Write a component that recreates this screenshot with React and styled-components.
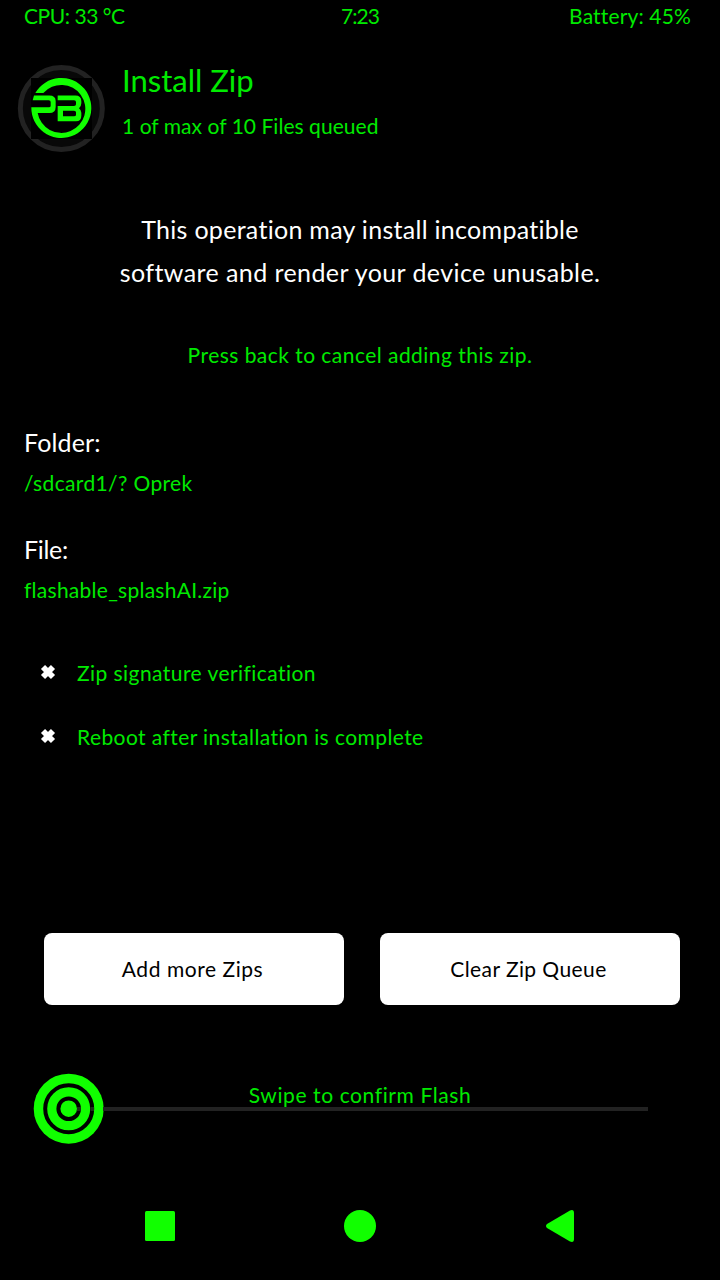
import React from "react";
import styled, { createGlobalStyle } from "styled-components";

const GREEN = "#00ea00";
const BRIGHT = "#11ff00";

const GlobalStyle = createGlobalStyle`
  *, *::before, *::after { box-sizing: border-box; }
  body { margin: 0; background: #000; }
`;

const Screen = styled.main`
  width: 720px;
  height: 1280px;
  overflow: hidden;
  display: flex;
  flex-direction: column;
  background: #000;
  color: ${GREEN};
  font-family: Lato, "Liberation Sans", sans-serif;
  font-size: 21px;
  font-variant-ligatures: none;
  line-height: 28px;
  white-space: nowrap;
`;

const Label = styled.span`
  letter-spacing: ${(p) => p.$track || 0}px;
`;

const StatusBar = styled.header`
  height: 64px;
  padding: 2px 29px 0;
  display: grid;
  grid-template-columns: 1fr auto 1fr;
  & > :first-child { margin-left: -5px; }
  & > :last-child { text-align: right; }
`;

const Header = styled.section`
  height: 144px;
  padding-left: 17px;
  display: flex;
  gap: 15px;
`;

const Logo = styled.svg`
  width: 90px;
  height: 90px;
`;

const Heading = styled.div`
  margin-top: -4px;
`;

const Title = styled.h1`
  margin: 0 0 12px;
  font-size: 31px;
  font-weight: 400;
  line-height: 40px;
`;

const Warning = styled.p`
  margin: 0;
  height: 133px;
  color: #fff;
  font-size: 25px;
  line-height: 43px;
  text-align: center;
`;

const Hint = styled.p`
  margin: 0;
  height: 83px;
  text-align: center;
`;

const Details = styled.dl`
  margin: 0;
  height: 235px;
  padding-left: 24px;
`;

const Term = styled.dt`
  color: #fff;
  font-size: 25px;
  line-height: 36px;
  margin-bottom: 9px;
`;

const Value = styled.dd`
  margin: 0 0 34px;
`;

const Options = styled.div`
  height: 274px;
  padding-left: 40px;
  display: flex;
  flex-direction: column;
  gap: 36px;
`;

const Option = styled.div`
  height: 28px;
  display: flex;
  gap: 21px;
`;

const Cross = styled.svg`
  width: 16px;
  height: 16px;
  margin-top: 5px;
`;

const Actions = styled.div`
  height: 140px;
  padding-left: 44px;
  display: flex;
  gap: 36px;
`;

const ActionButton = styled.button`
  width: 300px;
  height: 72px;
  padding: 0 3px 1px 0;
  border: 0;
  border-radius: 8px;
  background: #fff;
  color: #000;
  font: inherit;
`;

const Slider = styled.div`
  height: 137px;
  padding-left: 33px;
  position: relative;
`;

const SliderArt = styled.svg`
  display: block;
  width: 616px;
  height: 72px;
`;

const SliderText = styled.div`
  position: absolute;
  inset: 8px 0 auto;
  text-align: center;
`;

const NavBar = styled.nav`
  height: 32px;
  padding: 0 144px;
  display: flex;
  justify-content: space-between;
`;

const NavIcon = styled.svg`
  width: 32px;
  height: 32px;
  fill: ${BRIGHT};
`;

const CrossMark = () => (
  <Cross viewBox="0 0 16 16">
    <path d="M3 3L13 13M13 3L3 13" stroke="#fff" strokeWidth="5.8" />
  </Cross>
);

export default function App() {
  return (
    <>
      <GlobalStyle />
      <Screen>
        <StatusBar>
          <Label $track={-0.45}>CPU: 33 °C</Label>
          <Label $track={-0.9}>7:23</Label>
          <Label $track={0.15}>Battery: 45%</Label>
        </StatusBar>

        <Header>
          <Logo viewBox="51 42 270 270">
            <circle cx="184" cy="175.500" r="123" fill="#080808" stroke="#222" strokeWidth="15" />
            <path d="M93 84H276V267H93Z" fill="#000" />
            <g fill={BRIGHT}>
              <path d="M106 129A90 90 0 1 1 94 172H147Q152 172 152 167V156Q152 150.500 146 150.500H98L102 136.500H148Q167 136.500 167 153V171Q167 189 148 189H113A72 72 0 1 0 130 129Z" />
              <path d="M173 136.500H226Q244 136.500 244 154V160Q244 169 237 174.500Q244 180 244 188V197Q244 214 228 214H173V168H222Q228 168 228 163V156Q228 150.500 222 150.500H173ZM189 182V199H222Q228 199 228 194V187Q228 182 222 182Z" fillRule="evenodd" />
            </g>
          </Logo>
          <Heading>
            <Title><Label>Install Zip</Label></Title>
            <Label $track={0.04}>1 of max of 10 Files queued</Label>
          </Heading>
        </Header>

        <Warning>
          <Label $track={0.29}>This operation may install incompatible</Label>
          <br />
          <Label $track={0.42}>software and render your device unusable.</Label>
        </Warning>
        <Hint><Label $track={0.46}>Press back to cancel adding this zip.</Label></Hint>

        <Details>
          <Term><Label $track={0.15}>Folder:</Label></Term>
          <Value><Label $track={0.36}>/sdcard1/? Oprek</Label></Value>
          <Term><Label $track={-0.3}>File:</Label></Term>
          <Value><Label $track={0.26}>flashable_splashAI.zip</Label></Value>
        </Details>

        <Options>
          <Option>
            <CrossMark />
            <Label $track={0.44}>Zip signature verification</Label>
          </Option>
          <Option>
            <CrossMark />
            <Label $track={0.42}>Reboot after installation is complete</Label>
          </Option>
        </Options>

        <Actions>
          <ActionButton><Label $track={0.55}>Add more Zips</Label></ActionButton>
          <ActionButton><Label $track={0.42}>Clear Zip Queue</Label></ActionButton>
        </Actions>

        <Slider>
          <SliderArt viewBox="0 0 616 72">
            <circle cx="35.700" cy="35.700" r="35" fill={BRIGHT} />
            <circle cx="35.700" cy="35.700" r="23.500" fill="none" stroke="#000" strokeWidth="4" />
            <circle cx="35.700" cy="35.700" r="10.300" fill="none" stroke="#000" strokeWidth="4" />
            <path d="M44 34H48V38H44ZM57.500 34H61V38H57.500Z" fill="#1c2b1a" />
            <path d="M70 34H615V38H70Z" fill="#222" />
          </SliderArt>
          <SliderText><Label $track={0.6}>Swipe to confirm Flash</Label></SliderText>
        </Slider>

        <NavBar>
          <NavIcon viewBox="0 0 32 32"><rect x="1" y="1" width="30" height="30" rx="1.500" /></NavIcon>
          <NavIcon viewBox="0 0 32 32"><circle cx="16" cy="16" r="16" /></NavIcon>
          <NavIcon viewBox="0 0 32 32"><path d="M3 14L26 .5Q30 -1 30 3V29Q30 33 26 31.500L3 18Q1 16 3 14Z" /></NavIcon>
        </NavBar>
      </Screen>
    </>
  );
}
